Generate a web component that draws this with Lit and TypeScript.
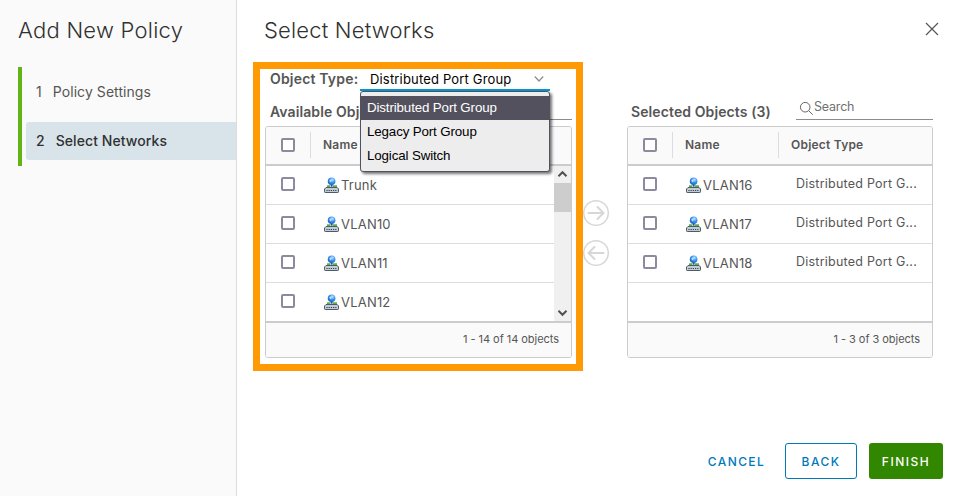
import { LitElement, html, svg, css } from "lit";
import { customElement, property } from "lit/decorators.js";

const FONT = css`"Metropolis", "Inter", "Open Sans", sans-serif`;

const portIcon = html`<svg width="16" height="16" viewBox="0 0 16 16">
  <defs>
    <radialGradient id="globe" cx="0.6" cy="0.3" r="0.75">
      <stop offset="0" stop-color="#c4e6ff" />
      <stop offset="0.45" stop-color="#3f98f5" />
      <stop offset="1" stop-color="#1257b8" />
    </radialGradient>
  </defs>
  <rect x="3" y="8.4" width="3" height="1.4" fill="#2fa01f" />
  <rect x="9" y="8.4" width="4" height="1.4" fill="#2fa01f" />
  <circle cx="7.6" cy="4.3" r="3.8" fill="url(#globe)" />
  <path d="M5.2 3.5l1.600-1 .9 1.300-1.200 1.600z" fill="#d9f0ff" opacity=".8" />
  <rect x="6.600" y="7.700" width="2" height="2" fill="#2a4f86" />
  <path d="M2 10.500h11.200l1.300 1.500v2.800a.7.7 0 0 1-.7.7H1.200a.7.7 0 0 1-.7-.7V12z" fill="#c3ccd4" stroke="#4c5b68" />
  <path d="M2.400 13.500h11" stroke="#34424f" stroke-width="1.200" stroke-dasharray="1.200 1" />
</svg>`;

@customElement("object-grid")
class ObjectGrid extends LitElement {
  @property({ type: Array }) rows: string[] = [];
  @property() footer = "";
  @property({ type: Boolean }) scrollable = false;
  @property({ type: Boolean }) typed = false;

  static styles = css`
    :host {
      display: flex;
      flex-direction: column;
      box-sizing: border-box;
      height: 232px;
      border: 1px solid #ccc;
      border-radius: 3px;
      overflow: hidden;
      background: #fff;
      color: #565656;
      font-family: ${FONT};
    }
    .row {
      display: flex;
      align-items: center;
      box-sizing: border-box;
      height: 39px;
      border-bottom: 1px solid #ddd;
    }
    .head {
      flex: none;
      background: #fafafa;
      border-bottom: 2px solid #ccc;
      padding-bottom: 1px;
      font-size: 12px;
      font-weight: 600;
      letter-spacing: 0.22px;
    }
    .head .cell {
      padding-bottom: 1px;
    }
    .check {
      display: flex;
      width: 44px;
      padding-left: 15px;
      box-sizing: border-box;
    }
    .check::before {
      content: "";
      box-sizing: border-box;
      width: 14px;
      height: 14px;
      border: 2px solid #8c8a9c;
      border-radius: 2px;
      background: #fff;
    }
    .cell {
      display: flex;
      align-items: center;
      box-sizing: border-box;
      height: 26px;
      padding-left: 12px;
      border-left: 1px solid #ddd;
    }
    .name {
      width: 106px;
    }
    .body {
      display: flex;
      flex: 1;
      min-height: 0;
    }
    .rows {
      flex: 1;
      min-width: 0;
      overflow: hidden;
      font-size: 13px;
    }
    .rows .row {
      padding-bottom: 2px;
    }
    .rows .cell {
      border-color: transparent;
      padding-left: 13px;
    }
    .rows .name {
      padding-top: 2px;
      gap: 1px;
      letter-spacing: 0.2px;
    }
    .rows .type {
      padding-left: 17px;
      padding-bottom: 1px;
      letter-spacing: 0.23px;
      font-size: 12.5px;
    }
    .bar {
      display: flex;
      flex-direction: column;
      width: 17px;
      background: #f0f0f0;
    }
    .bar svg {
      flex: none;
    }
    .thumb {
      height: 29px;
      background: #cdcdcd;
      margin-bottom: auto;
    }
    .foot {
      display: flex;
      align-items: center;
      justify-content: flex-end;
      flex: none;
      box-sizing: border-box;
      height: 36px;
      padding: 0 12px 2px 0;
      border-top: 2px solid #ccc;
      background: #fafafa;
      font-size: 11px;
      letter-spacing: -0.04px;
    }
  `;

  render() {
    const arrow = (d: string) => html`<svg width="17" height="17" viewBox="0 0 17 17">
      <path d=${d} fill="none" stroke="#505050" stroke-width="2" />
    </svg>`;
    return html`
      <div class="row head">
        <span class="check"></span>
        <span class="cell name">Name</span>
        ${this.typed ? html`<span class="cell">Object Type</span>` : null}
      </div>
      <div class="body">
        <div class="rows">
          ${this.rows.map(
            (name) => html`<div class="row">
              <span class="check"></span>
              <span class="cell name">${portIcon}<span>${name}</span></span>
              ${this.typed ? html`<span class="cell type">Distributed Port G...</span>` : null}
            </div>`
          )}
        </div>
        ${this.scrollable
          ? html`<div class="bar">
              ${arrow("M4.5 10.2l4-4 4 4")}
              <div class="thumb"></div>
              ${arrow("M4.5 6.8l4 4 4-4")}
            </div>`
          : null}
      </div>
      <div class="foot"><span>${this.footer}</span></div>
    `;
  }
}

@customElement("app-root")
class AppRoot extends LitElement {
  static styles = css`
    :host {
      display: flex;
      width: 962px;
      height: 496px;
      overflow: hidden;
      background: #fff;
      color: #565656;
      font-family: ${FONT};
    }
    .side {
      box-sizing: border-box;
      width: 237px;
      padding: 14px 0 0 18px;
      border-right: 1px solid #ddd;
      background: #fafafa;
    }
    h1 {
      margin: 0;
      height: 32px;
      font-size: 22px;
      line-height: 32px;
      font-weight: 300;
      color: #313131;
      white-space: nowrap;
    }
    .side h1 {
      letter-spacing: 0.25px;
    }
    .steps {
      display: flex;
      flex-direction: column;
      gap: 11px;
      box-sizing: border-box;
      height: 99px;
      margin-top: 21px;
      padding: 6px 0 6px 4px;
      border-left: 4px solid #60b515;
    }
    .step {
      display: flex;
      align-items: center;
      gap: 11px;
      box-sizing: border-box;
      height: 38px;
      padding: 0 0 2px 10px;
      border-radius: 3px 0 0 3px;
      font-size: 14px;
      letter-spacing: 0.07px;
    }
    .step.on {
      background: #d9e4ea;
      color: #313131;
      font-weight: 500;
    }
    .main {
      flex: 1;
      display: flex;
      flex-direction: column;
      padding: 14px 19px 17px 16px;
    }
    .top {
      display: flex;
      justify-content: space-between;
      padding-left: 11px;
    }
    .top h1 {
      letter-spacing: 0.18px;
    }
    .top svg {
      margin: 7px 3px 0 0;
    }
    .picker {
      display: flex;
      margin-top: 16px;
      height: 309px;
    }
    .frame {
      box-sizing: border-box;
      width: 330px;
      border: 7px solid #ff9a05;
      padding: 0 4px 0 5px;
    }
    .field {
      display: flex;
      height: 22px;
      padding-left: 5px;
    }
    .label {
      width: 90px;
      font-size: 14px;
      font-weight: 600;
      line-height: 20px;
      letter-spacing: 0.18px;
      white-space: nowrap;
    }
    .select {
      position: relative;
      display: flex;
      align-items: center;
      justify-content: space-between;
      box-sizing: border-box;
      width: 190px;
      height: 22px;
      padding: 0 6px 0 10px;
      border-bottom: 2px solid #0095d3;
      color: #000;
      font-size: 13px;
      letter-spacing: 0.17px;
    }
    .menu {
      position: absolute;
      z-index: 2;
      top: 22px;
      left: 0;
      box-sizing: border-box;
      width: 190px;
      height: 81px;
      padding-top: 4px;
      border: 1px solid #53515e;
      border-radius: 3px;
      background: #ededed;
      box-shadow: 2px 2px 3px rgba(0, 0, 0, 0.55);
      font: 13.33px/24px "Liberation Sans", Arial, sans-serif;
      letter-spacing: -0.13px;
    }
    .opt {
      height: 24px;
      padding-left: 6px;
    }
    .opt.on {
      background: #53515e;
      color: #fff;
    }
    .caption {
      display: flex;
      justify-content: space-between;
      box-sizing: border-box;
      height: 35px;
      padding-left: 5px;
      font-size: 14px;
      font-weight: 600;
      line-height: 42px;
      letter-spacing: 0.1px;
      white-space: nowrap;
    }
    .search {
      display: flex;
      align-items: center;
      box-sizing: border-box;
      width: 137px;
      height: 26px;
      margin-top: 3px;
      padding-left: 3px;
      border-bottom: 1px solid #8c8c8c;
      font-size: 12.5px;
      font-weight: 400;
      line-height: 16px;
      letter-spacing: -0.2px;
      color: #717171;
    }
    .search svg {
      margin-top: 3px;
    }
    .moves {
      display: flex;
      flex-direction: column;
      gap: 12px;
      width: 44px;
      padding-top: 137px;
      box-sizing: border-box;
    }
    .right {
      width: 306px;
      padding-top: 29px;
    }
    .right .caption {
      padding-left: 4px;
    }
    .actions {
      display: flex;
      justify-content: flex-end;
      margin-top: auto;
      gap: 12px;
    }
    .btn {
      display: flex;
      align-items: center;
      justify-content: center;
      box-sizing: border-box;
      height: 36px;
      border-radius: 3px;
      font-size: 12px;
      font-weight: 500;
      letter-spacing: 1.5px;
      color: #0079b8;
      padding-top: 1px;
    }
    .cancel {
      width: 73px;
      letter-spacing: 1.4px;
    }
    .back {
      width: 72px;
      border: 1px solid #0079b8;
    }
    .finish {
      width: 74px;
      background: #318700;
      color: #fff;
    }
  `;

  private search(label: string) {
    return html`<span class="search">
      ${label
        ? html`<svg width="15" height="15" viewBox="0 0 15 15" fill="none" stroke="#666">
              <circle cx="6.2" cy="6.2" r="4.8" />
              <path d="M9.7 9.7l4 4" />
            </svg>
            <span>${label}</span>`
        : null}
    </span>`;
  }

  private move(d: string) {
    return html`<svg width="28" height="28" viewBox="0 0 28 28" fill="none" stroke="#d7d7d7" stroke-width="1.5">
      <circle cx="13" cy="14" r="12.3" />
      ${svg`<path d=${d} stroke-width="2" stroke-linecap="round" />`}
    </svg>`;
  }

  render() {
    return html`
      <aside class="side">
        <h1>Add New Policy</h1>
        <div class="steps">
          <div class="step"><span>1</span><span>Policy Settings</span></div>
          <div class="step on"><span>2</span><span>Select Networks</span></div>
        </div>
      </aside>
      <section class="main">
        <div class="top">
          <h1>Select Networks</h1>
          <svg width="16" height="16" viewBox="0 0 16 16" stroke="#565656" stroke-width="1.2">
            <path d="M2 2l12 12M14 2L2 14" />
          </svg>
        </div>
        <div class="picker">
          <div class="frame">
            <div class="field">
              <span class="label">Object Type:</span>
              <div class="select">
                <span>Distributed Port Group</span>
                <svg width="10" height="8" viewBox="0 0 10 8" fill="none" stroke="#8c8c8c" stroke-width="1.2">
                  <path d="M.8 1.5L5 6l4.2-4.5" />
                </svg>
                <div class="menu">
                  <div class="opt on">Distributed Port Group</div>
                  <div class="opt">Legacy Port Group</div>
                  <div class="opt">Logical Switch</div>
                </div>
              </div>
            </div>
            <div class="caption"><span>Available Objects</span>${this.search("")}</div>
            <object-grid
              scrollable
              .rows=${["Trunk", "VLAN10", "VLAN11", "VLAN12"]}
              footer="1 - 14 of 14 objects"
            ></object-grid>
          </div>
          <div class="moves">
            ${this.move("M5.5 14h15M14.5 8l6 6-6 6")}
            ${this.move("M20.5 14h-15M11.5 8l-6 6 6 6")}
          </div>
          <div class="right">
            <div class="caption"><span>Selected Objects (3)</span>${this.search("Search")}</div>
            <object-grid
              typed
              .rows=${["VLAN16", "VLAN17", "VLAN18"]}
              footer="1 - 3 of 3 objects"
            ></object-grid>
          </div>
        </div>
        <div class="actions">
          <span class="btn cancel">CANCEL</span>
          <span class="btn back">BACK</span>
          <span class="btn finish">FINISH</span>
        </div>
      </section>
    `;
  }
}
